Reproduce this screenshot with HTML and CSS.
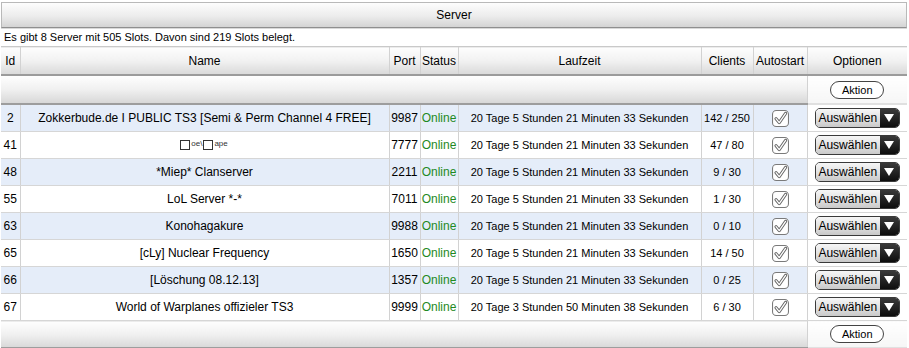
FILE: index.html
```html
<!DOCTYPE html>
<html>
<head>
<meta charset="utf-8">
<link rel="stylesheet" href="styles.css">
</head>
<body>
<div class="panel">
  <div class="title">Server</div>
  <div class="info">Es gibt 8 Server mit 505 Slots. Davon sind 219 Slots belegt.</div>
  <table class="grid">
    <colgroup>
      <col class="c-id"><col class="c-name"><col class="c-port"><col class="c-status"><col class="c-time"><col class="c-clients"><col class="c-auto"><col class="c-opt">
    </colgroup>
    <thead>
      <tr class="head">
        <th class="first">Id</th><th>Name</th><th>Port</th><th>Status</th><th>Laufzeit</th><th>Clients</th><th>Autostart</th><th>Optionen</th>
      </tr>
      <tr class="bar">
        <td colspan="7" class="first"></td><td class="opt"><span class="pill">Aktion</span></td>
      </tr>
    </thead>
    <tbody>
      <tr class="alt"><td class="first">2</td><td>Zokkerbude.de I PUBLIC TS3 [Semi &amp; Perm Channel 4 FREE]</td><td>9987</td><td class="on">Online</td><td class="time">20 Tage 5 Stunden 21 Minuten 33 Sekunden</td><td class="cl">142 / 250</td><td><svg class="chk" viewBox="0 0 16 16"><rect x="0.5" y="0.5" width="15" height="15" rx="3.5" fill="#fff" stroke="#7a7a7a"/><path d="M3.8 8.2 L6.8 11.8 L12.8 3.2" fill="none" stroke="#666" stroke-width="3" stroke-linejoin="round" stroke-linecap="round"/><path d="M3.8 8.2 L6.8 11.8 L12.8 3.2" fill="none" stroke="#fff" stroke-width="1.2" stroke-linejoin="round" stroke-linecap="round"/></svg></td><td class="opt"><span class="sel"><span class="sel-t">Auswählen</span><span class="sel-a"></span></span></td></tr>
      <tr><td class="first">41</td><td><span class="odd"><span class="box"></span><sup>oe\</sup><span class="box"></span><sup>ape</sup></span></td><td>7777</td><td class="on">Online</td><td class="time">20 Tage 5 Stunden 21 Minuten 33 Sekunden</td><td class="cl">47 / 80</td><td><svg class="chk" viewBox="0 0 16 16"><rect x="0.5" y="0.5" width="15" height="15" rx="3.5" fill="#fff" stroke="#7a7a7a"/><path d="M3.8 8.2 L6.8 11.8 L12.8 3.2" fill="none" stroke="#666" stroke-width="3" stroke-linejoin="round" stroke-linecap="round"/><path d="M3.8 8.2 L6.8 11.8 L12.8 3.2" fill="none" stroke="#fff" stroke-width="1.2" stroke-linejoin="round" stroke-linecap="round"/></svg></td><td class="opt"><span class="sel"><span class="sel-t">Auswählen</span><span class="sel-a"></span></span></td></tr>
      <tr class="alt"><td class="first">48</td><td>*Miep* Clanserver</td><td>2211</td><td class="on">Online</td><td class="time">20 Tage 5 Stunden 21 Minuten 33 Sekunden</td><td class="cl">9 / 30</td><td><svg class="chk" viewBox="0 0 16 16"><rect x="0.5" y="0.5" width="15" height="15" rx="3.5" fill="#fff" stroke="#7a7a7a"/><path d="M3.8 8.2 L6.8 11.8 L12.8 3.2" fill="none" stroke="#666" stroke-width="3" stroke-linejoin="round" stroke-linecap="round"/><path d="M3.8 8.2 L6.8 11.8 L12.8 3.2" fill="none" stroke="#fff" stroke-width="1.2" stroke-linejoin="round" stroke-linecap="round"/></svg></td><td class="opt"><span class="sel"><span class="sel-t">Auswählen</span><span class="sel-a"></span></span></td></tr>
      <tr><td class="first">55</td><td>LoL Server *-*</td><td>7011</td><td class="on">Online</td><td class="time">20 Tage 5 Stunden 21 Minuten 33 Sekunden</td><td class="cl">1 / 30</td><td><svg class="chk" viewBox="0 0 16 16"><rect x="0.5" y="0.5" width="15" height="15" rx="3.5" fill="#fff" stroke="#7a7a7a"/><path d="M3.8 8.2 L6.8 11.8 L12.8 3.2" fill="none" stroke="#666" stroke-width="3" stroke-linejoin="round" stroke-linecap="round"/><path d="M3.8 8.2 L6.8 11.8 L12.8 3.2" fill="none" stroke="#fff" stroke-width="1.2" stroke-linejoin="round" stroke-linecap="round"/></svg></td><td class="opt"><span class="sel"><span class="sel-t">Auswählen</span><span class="sel-a"></span></span></td></tr>
      <tr class="alt"><td class="first">63</td><td>Konohagakure</td><td>9988</td><td class="on">Online</td><td class="time">20 Tage 5 Stunden 21 Minuten 33 Sekunden</td><td class="cl">0 / 10</td><td><svg class="chk" viewBox="0 0 16 16"><rect x="0.5" y="0.5" width="15" height="15" rx="3.5" fill="#fff" stroke="#7a7a7a"/><path d="M3.8 8.2 L6.8 11.8 L12.8 3.2" fill="none" stroke="#666" stroke-width="3" stroke-linejoin="round" stroke-linecap="round"/><path d="M3.8 8.2 L6.8 11.8 L12.8 3.2" fill="none" stroke="#fff" stroke-width="1.2" stroke-linejoin="round" stroke-linecap="round"/></svg></td><td class="opt"><span class="sel"><span class="sel-t">Auswählen</span><span class="sel-a"></span></span></td></tr>
      <tr><td class="first">65</td><td>[cLy] Nuclear Frequency</td><td>1650</td><td class="on">Online</td><td class="time">20 Tage 5 Stunden 21 Minuten 33 Sekunden</td><td class="cl">14 / 50</td><td><svg class="chk" viewBox="0 0 16 16"><rect x="0.5" y="0.5" width="15" height="15" rx="3.5" fill="#fff" stroke="#7a7a7a"/><path d="M3.8 8.2 L6.8 11.8 L12.8 3.2" fill="none" stroke="#666" stroke-width="3" stroke-linejoin="round" stroke-linecap="round"/><path d="M3.8 8.2 L6.8 11.8 L12.8 3.2" fill="none" stroke="#fff" stroke-width="1.2" stroke-linejoin="round" stroke-linecap="round"/></svg></td><td class="opt"><span class="sel"><span class="sel-t">Auswählen</span><span class="sel-a"></span></span></td></tr>
      <tr class="alt"><td class="first">66</td><td>[Löschung 08.12.13]</td><td>1357</td><td class="on">Online</td><td class="time">20 Tage 5 Stunden 21 Minuten 33 Sekunden</td><td class="cl">0 / 25</td><td><svg class="chk" viewBox="0 0 16 16"><rect x="0.5" y="0.5" width="15" height="15" rx="3.5" fill="#fff" stroke="#7a7a7a"/><path d="M3.8 8.2 L6.8 11.8 L12.8 3.2" fill="none" stroke="#666" stroke-width="3" stroke-linejoin="round" stroke-linecap="round"/><path d="M3.8 8.2 L6.8 11.8 L12.8 3.2" fill="none" stroke="#fff" stroke-width="1.2" stroke-linejoin="round" stroke-linecap="round"/></svg></td><td class="opt"><span class="sel"><span class="sel-t">Auswählen</span><span class="sel-a"></span></span></td></tr>
      <tr><td class="first">67</td><td>World of Warplanes offizieler TS3</td><td>9999</td><td class="on">Online</td><td class="time">20 Tage 3 Stunden 50 Minuten 38 Sekunden</td><td class="cl">6 / 30</td><td><svg class="chk" viewBox="0 0 16 16"><rect x="0.5" y="0.5" width="15" height="15" rx="3.5" fill="#fff" stroke="#7a7a7a"/><path d="M3.8 8.2 L6.8 11.8 L12.8 3.2" fill="none" stroke="#666" stroke-width="3" stroke-linejoin="round" stroke-linecap="round"/><path d="M3.8 8.2 L6.8 11.8 L12.8 3.2" fill="none" stroke="#fff" stroke-width="1.2" stroke-linejoin="round" stroke-linecap="round"/></svg></td><td class="opt"><span class="sel"><span class="sel-t">Auswählen</span><span class="sel-a"></span></span></td></tr>
    </tbody>
    <tfoot>
      <tr class="bar">
        <td colspan="7" class="first"></td><td class="opt"><span class="pill">Aktion</span></td>
      </tr>
    </tfoot>
  </table>
</div>
</body>
</html>
```
FILE: styles.css
```css
html, body {
  margin: 0;
  padding: 0;
  background: #fff;
}
body {
  font-family: "Liberation Sans", Arial, sans-serif;
  font-size: 11px;
  color: #000;
}
.panel {
  width: 906px;
  margin: 2px 0 0 1px;
}
.title {
  height: 24px;
  line-height: 24px;
  text-align: center;
  font-size: 12px;
  border: 1px solid #b9b9b9;
  border-bottom-color: #8f8f8f;
  background: linear-gradient(#fdfdfd, #ececec 55%, #d4d4d4);
}
.info {
  height: 17px;
  line-height: 17px;
  padding-left: 3px;
  border-top: 1px solid #d9d9d9;
  font-size: 11px;
}
.grid {
  width: 906px;
  border-collapse: collapse;
  table-layout: fixed;
}
.c-id { width: 19px; }
.c-name { width: 369px; }
.c-port { width: 31px; }
.c-status { width: 38px; }
.c-time { width: 243px; }
.c-clients { width: 52px; }
.c-auto { width: 54px; }
.c-opt { width: 100px; }
.grid th, .grid td {
  padding: 0;
  text-align: center;
  white-space: nowrap;
  overflow: hidden;
  border-left: 1px solid #d2d2d2;
  font-size: 12px;
}
.grid .first {
  border-left: 0;
}
.head th {
  height: 27px;
  font-weight: normal;
  background: linear-gradient(#fefefe, #f1f1f1 50%, #d9d9d9);
  border-top: 1px solid #c9c9c9;
  border-bottom: 2px solid #9b9b9b;
}
.bar td {
  height: 27px;
  background: linear-gradient(#fefefe, #f0f0f0 50%, #d8d8d8);
  border-bottom: 2px solid #9d9d9d;
  border-top: 1px solid #fff;
}
.bar td.opt {
  background: linear-gradient(#fff, #f6f6f6);
  border-left: 1px solid #d2d2d2;
  border-bottom-color: #e0e0e0;
}
tfoot .bar td {
  border-top: 0;
  height: 26px;
}
tbody td {
  height: 26px;
  border-bottom: 1px solid #d6d6d6;
}
tbody tr.alt td {
  background: #e5edf9;
}
tbody td.opt, tbody tr.alt td.opt {
  background: #fff;
}
.grid td.time, .grid td.cl {
  font-size: 11px;
}
.on {
  color: #1f8a1f;
}
.odd {
  font-size: 9px;
  color: #333;
}
.odd sup {
  font-size: 8px;
  vertical-align: 3px;
  margin: 0 1px;
}
.box {
  display: inline-block;
  width: 8px;
  height: 8px;
  border: 1px solid #333;
  vertical-align: -1px;
}
.chk {
  width: 17px;
  height: 17px;
  vertical-align: middle;
}
.pill {
  display: inline-block;
  width: 52px;
  height: 16px;
  line-height: 16px;
  border: 1px solid #444;
  border-radius: 9px;
  background: #fff;
  font-size: 11px;
}
.sel {
  display: inline-flex;
  align-items: stretch;
  height: 18px;
  border: 1px solid #3a3a3a;
  border-radius: 5px;
  overflow: hidden;
  vertical-align: middle;
}
.sel-t {
  width: 64px;
  line-height: 18px;
  font-size: 12px;
  background: linear-gradient(#f6f6f6, #e2e2e2 50%, #c9c9c9);
}
.sel-a {
  width: 19px;
  background: linear-gradient(#3a3a3a, #0d0d0d);
  display: flex;
  align-items: center;
  justify-content: center;
}
.sel-a::after {
  content: "";
  width: 0;
  height: 0;
  border-left: 5px solid transparent;
  border-right: 5px solid transparent;
  border-top: 8px solid #fff;
}
```
